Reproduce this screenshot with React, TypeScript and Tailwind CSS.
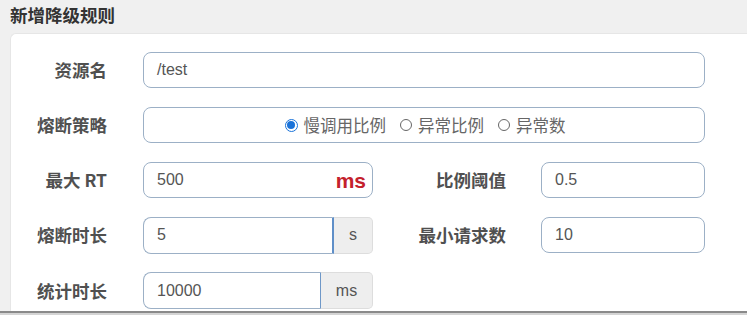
import React from "react";

const font = { fontFamily: '"Liberation Sans", "Noto Sans CJK SC", sans-serif' };

function Label({ text, w }: { text: string; w: string }) {
  return (
    <div
      className={`${w} shrink-0 text-right text-[17.5px] font-bold text-[#505050] leading-none`}
      style={{ fontFamily: '"Noto Sans CJK SC", "Liberation Sans", sans-serif' }}
    >
      {text}
    </div>
  );
}

function Radio({ checked, label }: { checked?: boolean; label: string }) {
  return (
    <div className="flex items-center gap-[6px]">
      {checked ? (
        <span className="w-[13px] h-[13px] rounded-full border border-[#1a73d9] bg-white flex items-center justify-center">
          <span className="w-[8px] h-[8px] rounded-full bg-[#1a73d9]" />
        </span>
      ) : (
        <span className="w-[12px] h-[12px] rounded-full border border-[#666] bg-white" />
      )}
      <span
        className="text-[16.5px] text-[#666] leading-none"
        style={{ fontFamily: '"Noto Sans CJK SC", sans-serif' }}
      >
        {label}
      </span>
    </div>
  );
}

export default function App() {
  return (
    <div
      className="w-[747px] h-[315px] overflow-hidden bg-[#f0f0f0] flex flex-col"
      style={font}
    >
      <div className="h-[33px] shrink-0 pl-[10px] flex items-center pb-[4px]">
        <span
          className="text-[17.5px] font-bold text-[#333] leading-none"
          style={{ fontFamily: '"Noto Sans CJK SC", sans-serif' }}
        >
          新增降级规则
        </span>
      </div>
      <div className="flex-1 ml-[10px] bg-white rounded-tl-[6px] border-l border-t border-[#e6e6e6] pt-[18px] flex flex-col gap-[19px] overflow-hidden">
        {/* Row 1 */}
        <div className="flex items-center h-[36px] shrink-0">
          <Label text="资源名" w="w-[96px]" />
          <div className="ml-[36px] w-[562px] h-[36px] rounded-[8px] border border-[#9cb0c6] flex items-center pl-[13px] text-[16px] text-[#555]">
            /test
          </div>
        </div>
        {/* Row 2 */}
        <div className="flex items-center h-[36px] shrink-0">
          <Label text="熔断策略" w="w-[96px]" />
          <div className="ml-[36px] w-[562px] h-[36px] rounded-[8px] border border-[#9cb0c6] flex items-center justify-center gap-[14px] pl-[2px]">
            <Radio checked label="慢调用比例" />
            <Radio label="异常比例" />
            <Radio label="异常数" />
          </div>
        </div>
        {/* Row 3 */}
        <div className="flex items-center h-[36px] shrink-0">
          <Label text="最大 RT" w="w-[96px]" />
          <div className="ml-[36px] w-[230px] h-[36px] rounded-[8px] border border-[#9cb0c6] flex items-center justify-between pl-[13px] pr-[6px] text-[16px] text-[#555]">
            <span>500</span>
            <span className="text-[21px] font-bold text-[#c4212c] leading-none">ms</span>
          </div>
          <Label text="比例阈值" w="w-[133px]" />
          <div className="ml-[35px] w-[164px] h-[36px] rounded-[8px] border border-[#9cb0c6] flex items-center pl-[13px] text-[16px] text-[#555]">
            0.5
          </div>
        </div>
        {/* Row 4 */}
        <div className="flex items-center h-[36px] shrink-0">
          <Label text="熔断时长" w="w-[96px]" />
          <div className="ml-[36px] w-[230px] h-[37px] flex">
            <div className="w-[191px] h-full rounded-l-[8px] border border-[#9cb0c6] border-r-[#5f8fc8] border-r-2 flex items-center pl-[13px] text-[16px] text-[#555]">
              5
            </div>
            <div className="flex-1 h-full rounded-r-[5px] bg-[#eeeeee] border border-l-0 border-[#dddddd] flex items-center justify-center text-[16px] text-[#555]">
              s
            </div>
          </div>
          <Label text="最小请求数" w="w-[133px]" />
          <div className="ml-[35px] w-[164px] h-[36px] rounded-[8px] border border-[#9cb0c6] flex items-center pl-[13px] text-[16px] text-[#555]">
            10
          </div>
        </div>
        {/* Row 5 */}
        <div className="flex items-center h-[37px] shrink-0">
          <Label text="统计时长" w="w-[96px]" />
          <div className="ml-[36px] w-[230px] h-[37px] flex">
            <div className="w-[178px] h-full rounded-l-[8px] border border-[#9cb0c6] border-r-[#6f98c8] flex items-center pl-[13px] text-[16px] text-[#555]">
              10000
            </div>
            <div className="flex-1 h-full rounded-r-[5px] bg-[#eeeeee] border border-l-0 border-[#dddddd] flex items-center justify-center text-[16px] text-[#555]">
              ms
            </div>
          </div>
        </div>
      </div>
      <div className="h-[4px] shrink-0 border-t-2 border-[#8a8a8a] bg-[#d4d4d4]" />
    </div>
  );
}
